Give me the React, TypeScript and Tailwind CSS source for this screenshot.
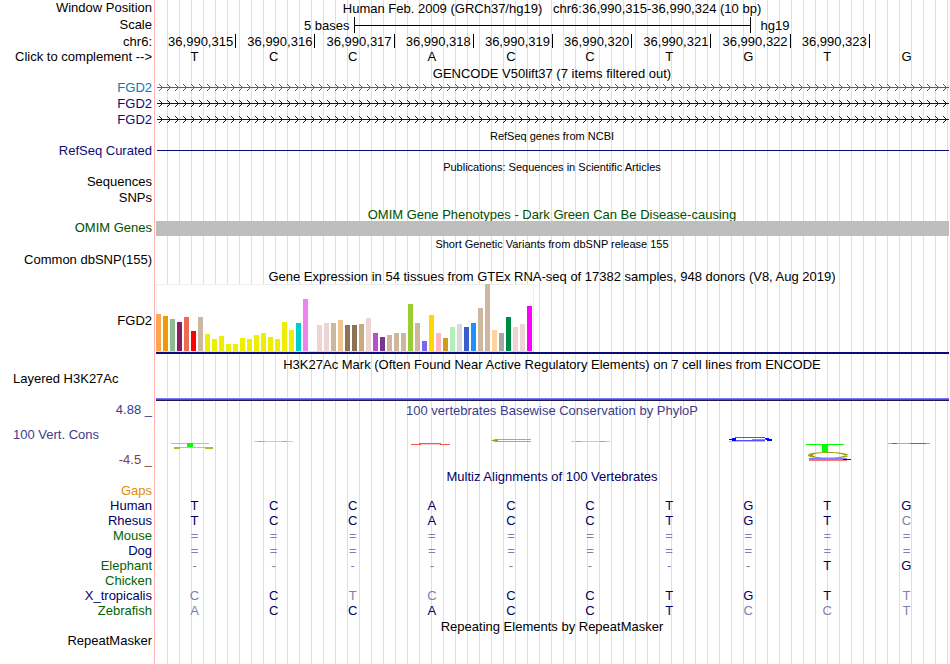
import { useState } from 'react';
import type { ReactNode } from 'react';
import clsx from 'clsx';

const SEQUENCE = ['T', 'C', 'C', 'A', 'C', 'C', 'T', 'G', 'T', 'G'];
const COMPLEMENT: Record<string, string> = { A: 'T', T: 'A', C: 'G', G: 'C' };
const POSITIONS = [315, 316, 317, 318, 319, 320, 321, 322, 323];

// One [height, colour] pair per GTEx tissue
const TISSUES: [number, string][] = [
    [37, '#ffa54f'], [35, '#ee9a00'], [32, '#8fbc8f'], [29, '#8b1c62'], [34, '#ee6a50'], [20, '#ff0000'],
    [34, '#cdb79e'], [17, '#eeee00'], [12, '#eeee00'], [15, '#eeee00'], [7, '#eeee00'], [7, '#eeee00'],
    [13, '#eeee00'], [12, '#eeee00'], [16, '#eeee00'], [18, '#eeee00'], [14, '#eeee00'], [12, '#eeee00'],
    [29, '#eeee00'], [21, '#eeee00'], [28, '#00cdcd'], [52, '#ee82ee'], [0, '#9ac0cd'], [26, '#eed5d2'],
    [28, '#eed5d2'], [28, '#cdb79e'], [31, '#eec591'], [26, '#8b7355'], [26, '#8b7355'], [27, '#cdaa7d'],
    [33, '#eed5d2'], [18, '#b452cd'], [14, '#7a378b'], [16, '#cdb79e'], [18, '#cdb79e'], [18, '#cdb79e'],
    [47, '#9acd32'], [28, '#cdb79e'], [10, '#7a67ee'], [36, '#ffd700'], [18, '#ffb6c1'], [13, '#cd9b1d'],
    [24, '#b4eeb4'], [27, '#d9d9d9'], [24, '#3a5fcd'], [28, '#1e90ff'], [43, '#cdb79e'], [67, '#cdb79e'],
    [21, '#ffd39b'], [18, '#a6a6a6'], [34, '#008b45'], [24, '#eed5d2'], [27, '#eed5d2'], [45, '#ff00ff'],
];

// Lower case marks bases that differ from human
const SPECIES = [
    { name: 'Gaps', color: 'text-[#e68a0a]', bases: '          ' },
    { name: 'Human', color: 'text-[#000064]', bases: 'TCCACCTGTG' },
    { name: 'Rhesus', color: 'text-[#000064]', bases: 'TCCACCTGTc' },
    { name: 'Mouse', color: 'text-[#006400]', bases: '==========' },
    { name: 'Dog', color: 'text-[#000064]', bases: '==========' },
    { name: 'Elephant', color: 'text-[#006400]', bases: '--------TG' },
    { name: 'Chicken', color: 'text-[#006400]', bases: '          ' },
    { name: 'X_tropicalis', color: 'text-[#000064]', bases: 'cCtcCCTGTt' },
    { name: 'Zebrafish', color: 'text-[#006400]', bases: 'aCCACCTcct' },
];

interface RowProps {
    label?: ReactNode;
    height: string;
    labelColor?: string;
    children?: ReactNode;
}

const Row = ({ label, height, labelColor = 'text-black', children }: RowProps) => (
    <div className={clsx('flex items-center', height)}>
        <div className={clsx('w-[155px] shrink-0 pr-[3px] pb-0.5 text-right whitespace-nowrap', labelColor)}>{label}</div>
        <div className="h-full min-w-0 flex-1">{children}</div>
    </div>
);

const Title = ({ small, color, children }: { small?: boolean; color?: string; children: ReactNode }) => (
    <h2 className={clsx('flex h-full items-center justify-center pt-px whitespace-pre', small && 'text-[11px]', color)}>
        {children}
    </h2>
);

const GeneLine = ({ id, color }: { id: string; color: string }) => (
    <svg className="block h-4 w-full pl-0.5" shapeRendering="crispEdges">
        <defs>
            <pattern id={id} width="8" height="16" patternUnits="userSpaceOnUse">
                <path
                    d="M2 4h1v1h-1z M3 5h1v1h-1z M4 6h1v1h-1z M5 7h1v1h-1z M4 8h1v1h-1z M3 9h1v1h-1z M2 10h1v1h-1z"
                    fill={color}
                />
            </pattern>
        </defs>
        <rect width="100%" height="16" fill={`url(#${id})`} />
        <rect y="7" width="100%" height="1" fill={color} />
    </svg>
);

const ExpressionChart = () => (
    <svg className="ml-px block" width="378" height="68" shapeRendering="crispEdges">
        <rect width="378" height="68" fill="#eeeeee" />
        <rect x="1" y="1" width="376" height="66" fill="#ffffff" />
        <rect y="67" width="378" height="1" fill="#dcdcdc" />
        {TISSUES.map(([height, color], i) => (
            <rect key={i} x={i * 7} y={67 - height} width="5" height={height} fill={color} />
        ))}
    </svg>
);

// Conservation marks for each base, drawn in cell coordinates
const MARKS: ReactNode[] = [
    <>
        <path d="M16 25.5H54" stroke="#5aff5a" />
        <path d="M32 25h6v4h-6z" fill="#00ff00" />
        <path d="M19 29.5H58" stroke="#c8c86e" />
        <path d="M19 30h6M50 30h8" stroke="#b4b432" strokeWidth="2" />
    </>,
    <>
        <path d="M20 23.5H59" stroke="#d2d296" />
        <path d="M24 23.5h7M48 23.5h5" stroke="#b4b446" />
    </>,
    null,
    <>
        <path d="M18 26.5h10M47 26.5h10" stroke="#ff5050" />
        <path d="M26 25.5h22" stroke="#ff5050" />
        <path d="M28 26.5h19" stroke="#ffc8c8" />
    </>,
    <>
        <path d="M23 21.5h36M23 23.5h36" stroke="#b4b43c" />
        <path d="M19 22.5l3-1h4v2h-4z" fill="#a0a000" />
    </>,
    <>
        <path d="M20 23.5H59" stroke="#d2d296" />
        <path d="M25 23.5h5M49 23.5h5" stroke="#b4b446" />
    </>,
    null,
    <>
        <path d="M20 23.5h36" stroke="#c8c88c" />
        <path d="M26 19.5H56M26 22.5H56" stroke="#5050ff" />
        <path d="M20 21h3v-1h4v3h-4v-1h-3z M56 20h4v1h3v2h-5v-1h-2z" fill="#0000ff" />
        <path d="M43 21.5h14" stroke="#8c8cff" />
    </>,
    <>
        <path d="M17 26.5H55" stroke="#00ff00" />
        <path d="M33 26h6v8h-6z" fill="#00ff00" />
        <path
            d="M60 37C56 34.8 48 34 40 34C28 34 19 35 19 37.2C19 39.5 28 40.5 40 40.5C49 40.5 56 39.8 60 38L56 37.5C52 39 47 39.5 40 39.5C31 39.5 24 39 24 37.2C24 35.5 31 35 40 35C47 35 52 35.6 56 37.2z"
            fill="#a0a000"
        />
        <path d="M20 41h38" stroke="#8282ff" strokeWidth="2" />
        <path d="M54 41.5h8" stroke="#0000ff" />
        <path d="M20 42.5h38" stroke="#ff7878" />
    </>,
    <>
        <path d="M20 25.5h42" stroke="#a0a0ff" />
        <path d="M24 25.5h5M42 25.5h16" stroke="#5a5aff" />
    </>,
];

const App = () => {
    const [reversed, setReversed] = useState(false);
    const bases = reversed ? SEQUENCE.map((base) => COMPLEMENT[base]) : SEQUENCE;

    return (
        <main className="min-h-screen bg-white bg-[linear-gradient(#ffb4b4,#ffb4b4),repeating-linear-gradient(90deg,transparent_0_11px,#dcdcf8_11px_12px)] bg-[length:1px_100%,100%_100%] bg-[position:154px_0,156px_0] bg-no-repeat pr-px font-['Liberation_Sans',Arial,sans-serif] text-[13px] leading-[15px] text-black">
            <Row label="Window Position" height="h-4">
                <Title>Human Feb. 2009 (GRCh37/hg19)   chr6:36,990,315-36,990,324 (10 bp)</Title>
            </Row>
            <Row label="Scale" height="h-[18px]">
                <div className="flex h-full items-center">
                    <span className="w-1/4 pr-1 text-right">5 bases</span>
                    <span className="flex h-4 w-1/2 items-center border-x border-black">
                        <span className="h-px w-full bg-black" />
                    </span>
                    <span className="pl-2.5">hg19</span>
                </div>
            </Row>
            <Row label="chr6:" height="h-4">
                <div className="grid h-full grid-cols-10 pl-0.5">
                    {POSITIONS.map((pos) => (
                        <span key={pos} className="h-3.5 border-r border-black pr-0.5 text-right leading-4">
                            36,990,{pos}
                        </span>
                    ))}
                </div>
            </Row>
            <Row
                label={<button type="button" className="cursor-pointer" onClick={() => setReversed(!reversed)}>Click to complement --&gt;</button>}
                height="h-[15px]"
            >
                <div className="grid h-full grid-cols-10 pr-[3px] text-center leading-[14px]">
                    {bases.map((base, i) => (
                        <span key={i}>{base}</span>
                    ))}
                </div>
            </Row>

            <Row height="h-[15px]">
                <Title>GENCODE V50lift37 (7 items filtered out)</Title>
            </Row>
            <Row label="FGD2" height="h-4" labelColor="text-[#0c78b4]">
                <GeneLine id="gene-a" color="#0c78b4" />
            </Row>
            <Row label="FGD2" height="h-4" labelColor="text-[#0c0c78]">
                <GeneLine id="gene-b" color="#0c0c78" />
            </Row>
            <Row label="FGD2" height="h-4" labelColor="text-[#0c0c78]">
                <GeneLine id="gene-c" color="#0c0c78" />
            </Row>

            <Row height="h-[15px]">
                <Title small>RefSeq genes from NCBI</Title>
            </Row>
            <Row label="RefSeq Curated" height="h-4" labelColor="text-[#0c0c78]">
                <div className="flex h-[15px] items-center pl-0.5">
                    <div className="h-px w-full bg-[#0c0c78]" />
                </div>
            </Row>

            <Row height="h-[15px]">
                <Title small>Publications: Sequences in Scientific Articles</Title>
            </Row>
            <Row label="Sequences" height="h-4" />
            <Row label="SNPs" height="h-4" />

            <Row height="h-[15px]">
                <Title color="text-[#005000]">OMIM Gene Phenotypes - Dark Green Can Be Disease-causing</Title>
            </Row>
            <Row label="OMIM Genes" height="h-[15px]" labelColor="text-[#005000]">
                <div className="ml-px h-full bg-[#bebebe]" />
            </Row>

            <Row height="h-4">
                <Title small>Short Genetic Variants from dbSNP release 155</Title>
            </Row>
            <Row label="Common dbSNP(155)" height="h-4" />

            <Row height="h-4">
                <Title>Gene Expression in 54 tissues from GTEx RNA-seq of 17382 samples, 948 donors (V8, Aug 2019)</Title>
            </Row>
            <Row label={<span className="block pt-1">FGD2</span>} height="h-[70px]">
                <ExpressionChart />
                <div className="ml-px h-0.5 bg-[#0c0c78]" />
            </Row>

            <Row height="h-[19px]">
                <Title>H3K27Ac Mark (Often Found Near Active Regulatory Elements) on 7 cell lines from ENCODE</Title>
            </Row>
            <div className="flex h-7 flex-col justify-between">
                <span className="pl-[13px] leading-3">Layered H3K27Ac</span>
                <div className="ml-[156px] h-[3px] border-t border-b border-t-[#7878ff] border-b-[#1c1c50] bg-[#5050a0]" />
            </div>

            <Row label={<span className="block pt-px">4.88 _</span>} height="h-[17px]" labelColor="text-[#3c3c8c]">
                <Title color="text-[#3c3c8c]">100 vertebrates Basewise Conservation by PhyloP</Title>
            </Row>
            <div className="flex h-[51px]">
                <div className="flex w-[155px] shrink-0 flex-col justify-between pt-[9px] pr-[3px] pb-0.5">
                    <span className="pl-[13px] text-[#3c3c8c]">100 Vert. Cons</span>
                    <span className="text-right text-[#8c3c3c]">-4.5 _</span>
                </div>
                <div className="grid flex-1 grid-cols-10 pr-0.5">
                    {MARKS.map((mark, i) => (
                        <svg key={i} className="block" width="79" height="51">{mark}</svg>
                    ))}
                </div>
            </div>

            <Row height="h-3.5">
                <Title color="text-[#000064]">Multiz Alignments of 100 Vertebrates</Title>
            </Row>
            <div className="pr-[3px]">
                <table className="w-full table-fixed border-collapse text-center">
                    <tbody>
                        {SPECIES.map(({ name, color, bases: row }) => (
                            <tr key={name} className="h-[15px]">
                                <th scope="row" className={clsx('w-[155px] p-0 pr-[3px] text-right font-normal', color)}>
                                    {name}
                                </th>
                                {row.split('').map((base, i) => (
                                    <td key={i} className={clsx('p-0', /[A-Z]/.test(base) ? 'text-[#000064]' : 'text-[#8080b0]')}>
                                        {base.toUpperCase()}
                                    </td>
                                ))}
                            </tr>
                        ))}
                    </tbody>
                </table>
            </div>

            <Row height="h-4">
                <Title>Repeating Elements by RepeatMasker</Title>
            </Row>
            <Row label="RepeatMasker" height="h-[15px]" />
        </main>
    );
};

export default App;
